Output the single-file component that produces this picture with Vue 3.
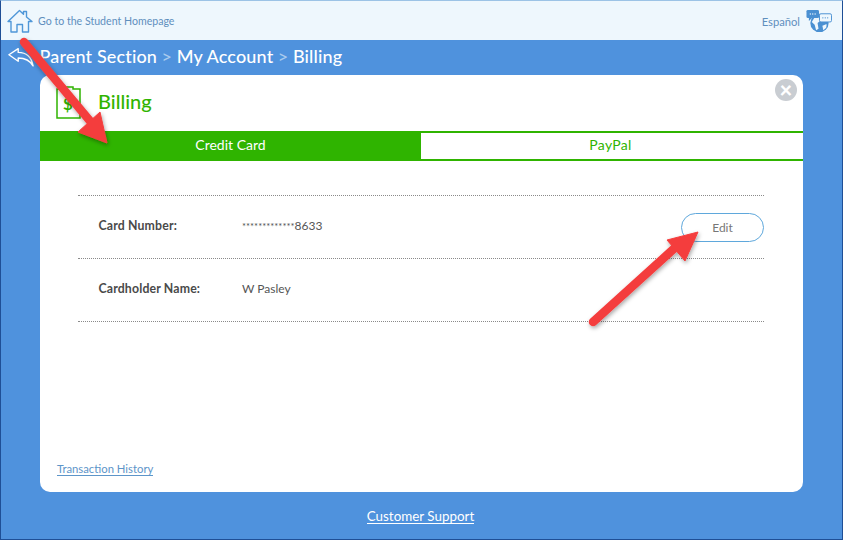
<script setup>
const crumbs = ['Parent Section', 'My Account', 'Billing']
const rows = [
  { label: 'Card Number:', mask: '*************', value: '8633', edit: true },
  { label: 'Cardholder Name:', mask: '', value: 'W Pasley', edit: false },
]
</script>

<template>
  <div class="page">
    <header class="top">
      <div class="home">
        <svg class="home-icon" viewBox="0 0 26 24" fill="none" stroke="#4f97d8" stroke-width="1.4" stroke-linejoin="round" stroke-linecap="round">
          <path d="M1 12.5 L12.5 1.5 L16.5 5.2 V2.5 H19.5 V8 L25 12.5 H21.5 V23 H15.5 V15.5 H10 V23 H4 V12.5 Z" />
        </svg>
        <span>Go to the Student Homepage</span>
      </div>
      <div class="lang">
        <span>Español</span>
        <svg class="globe" viewBox="0 0 27 24">
          <circle cx="14" cy="14" r="9.5" fill="#4a90d2" />
          <path d="M9 8 L14 8 L16 11 L12 14 L13 20 L10.5 21.5 L9 16 L6 13 Z" fill="#eef7fd" />
          <path d="M17 17 L21.5 15 L21 19 L18 21.5 Z" fill="#eef7fd" />
          <rect x="0.5" y="0.5" width="13" height="8.5" rx="1.5" fill="#4a90d2" />
          <path d="M3 8 V12 L7 8 Z" fill="#4a90d2" />
          <rect x="14" y="4.5" width="12.5" height="8.5" rx="1.5" fill="#eef7fd" stroke="#4a90d2" stroke-width="1" />
          <path d="M22 13 V16 L18.5 13 Z" fill="#4a90d2" />
          <g fill="#eef7fd"><circle cx="4.5" cy="4.7" r=".7" /><circle cx="7" cy="4.7" r=".7" /><circle cx="9.5" cy="4.7" r=".7" /></g>
          <g fill="#4a90d2"><circle cx="17.5" cy="8.7" r=".7" /><circle cx="20" cy="8.7" r=".7" /><circle cx="22.5" cy="8.7" r=".7" /></g>
        </svg>
      </div>
    </header>

    <nav class="crumbs">
      <svg class="back" viewBox="0 0 28 22" fill="none" stroke="#fff" stroke-width="1.5" stroke-linejoin="round">
        <path d="M1 8 L11 1.5 V5.5 C19 5.5 25 9 27 20 C23 13 18 11.5 11 11.5 V15 Z" />
      </svg>
      <template v-for="(c, i) in crumbs" :key="c">
        <span v-if="i" class="sep">&gt;</span>
        <span>{{ c }}</span>
      </template>
    </nav>

    <main class="card">
      <div class="card-head">
        <svg class="bill" viewBox="0 0 25 33" fill="none" stroke="#2fb400" stroke-width="1.5">
          <path d="M1 3 H7 V1 H17 V3 H24 V32 H1 Z" />
          <text x="7" y="24" class="dollar">$</text>
        </svg>
        <h1>Billing</h1>
        <span class="close">×</span>
      </div>
      <div class="tabs">
        <div class="tab on">Credit Card</div>
        <div class="tab">PayPal</div>
      </div>
      <section class="rows">
        <div v-for="r in rows" :key="r.label" class="row">
          <span class="label">{{ r.label }}</span>
          <span class="value"><span class="mask">{{ r.mask }}</span>{{ r.value }}</span>
          <button v-if="r.edit" class="edit">Edit</button>
        </div>
      </section>
      <a class="history">Transaction History</a>
    </main>

    <footer class="foot"><a>Customer Support</a></footer>

    <svg class="arrows" viewBox="0 0 843 540">
      <defs>
        <filter id="sh" x="-20%" y="-20%" width="140%" height="140%">
          <feDropShadow dx="1" dy="2" stdDeviation="2" flood-color="#000" flood-opacity=".35" />
        </filter>
      </defs>
      <g filter="url(#sh)" fill="#f43e3e" stroke="#f43e3e" stroke-linejoin="round">
        <path d="M24 42 L90 121" stroke-width="8.5" stroke-linecap="round" />
        <path d="M78 132 L100 112 L107 143 Z" stroke-width="1" />
        <path d="M593 322 L678 245" stroke-width="8.5" stroke-linecap="round" />
        <path d="M667 240 L698 232 L685 261 Z" stroke-width="1" />
      </g>
    </svg>
  </div>
</template>

<style scoped>
.page {
  position: relative;
  width: 843px;
  height: 540px;
  box-sizing: border-box;
  display: flex;
  flex-direction: column;
  overflow: hidden;
  background: #4f92dd;
  border: 1px solid #1f4f96;
  border-top-color: #9cc3e6;
  font-family: Lato, "Noto Sans", sans-serif;
}
.top {
  height: 39px;
  flex: none;
  display: flex;
  align-items: center;
  justify-content: space-between;
  padding: 0 10px 0 6px;
  background: #eef7fd;
  color: #5f8fbd;
  font-size: 10.6px;
}
.home, .lang { display: flex; align-items: center; }
.home { gap: 5px; }
.home-icon { width: 26px; height: 24px; }
.lang { gap: 6px; margin-top: 1px; font-size: 11.2px; }
.globe { width: 26px; height: 24px; }
.crumbs {
  height: 35px;
  flex: none;
  display: flex;
  align-items: center;
  gap: 4.5px;
  padding: 0 0 4px 7px;
  color: #fff;
  font-size: 18px;
  font-weight: 500;
  letter-spacing: .15px;
  box-sizing: border-box;
}
.back { width: 26px; height: 21px; margin: 3px 1px 0 0; }
.sep { color: #a9cbee; }
.card {
  width: 763px;
  height: 417px;
  flex: none;
  box-sizing: border-box;
  margin-left: 39px;
  background: #fff;
  border-radius: 10px;
  display: flex;
  flex-direction: column;
}
.card-head {
  height: 56px;
  flex: none;
  position: relative;
  display: flex;
  align-items: center;
  padding-left: 16px;
  gap: 17px;
}
.bill { width: 25px; height: 33px; margin-top: -1px; }
.dollar { fill: #2fb400; stroke: none; font-size: 17px; font-weight: 700; font-family: Lato, sans-serif; }
h1 {
  margin: -5px 0 0;
  font-size: 20px;
  font-weight: 500;
  color: #2fb400;
}
.close {
  position: absolute;
  top: 4px;
  right: 6px;
  width: 22px;
  height: 22px;
  border-radius: 50%;
  background: #c9cdd2;
  color: #fff;
  font-size: 22px;
  font-weight: 900;
  line-height: 21px;
  text-align: center;
}
.tabs {
  height: 30px;
  flex: none;
  display: flex;
  box-sizing: border-box;
  border-top: 2px solid #2fb400;
  border-bottom: 2px solid #2fb400;
}
.tab {
  width: 381px;
  display: flex;
  align-items: center;
  justify-content: center;
  font-size: 14px;
  padding-bottom: 4px;
  color: #2fb400;
}
.tab:last-child { flex: 1; letter-spacing: .3px; padding-right: 3px; }
.tab.on { background: #2fb400; color: #fff; }
.rows {
  margin: 34px 39px 0 37.5px;
  border-top: 1px dotted #8a8a8a;
}
.row {
  height: 62px;
  display: flex;
  align-items: center;
  position: relative;
  padding-left: 21px;
  border-bottom: 1px dotted #8a8a8a;
  font-size: 12px;
  color: #555;
}
.label { width: 143.5px; margin-top: -3px; font-weight: 700; font-size: 12.3px; letter-spacing: .15px; color: #4a4a4a; }
.value { margin-top: -3px; color: #555; }
.mask { font-size: 9.5px; }
.edit {
  margin-left: auto;
  width: 83px;
  height: 29px;
  border: 1px solid #5fa8dc;
  border-radius: 15px;
  background: #fff;
  color: #777;
  font: 12px Lato, sans-serif;
}
.history {
  margin: auto 0 16px 17px;
  align-self: flex-start;
  color: #5d95c9;
  font-size: 11.3px;
  border-bottom: 1px solid #5d95c9;
  line-height: 13px;
}
.foot {
  flex: 1;
  display: flex;
  justify-content: center;
  align-items: center;
  color: #fff;
  font-size: 13.4px;
  padding: 1px 2px 0 0;
}
.foot a { border-bottom: 1px solid #fff; line-height: 14px; }
.arrows {
  position: absolute;
  left: -1px;
  top: -1px;
  width: 843px;
  height: 540px;
  pointer-events: none;
}
</style>
